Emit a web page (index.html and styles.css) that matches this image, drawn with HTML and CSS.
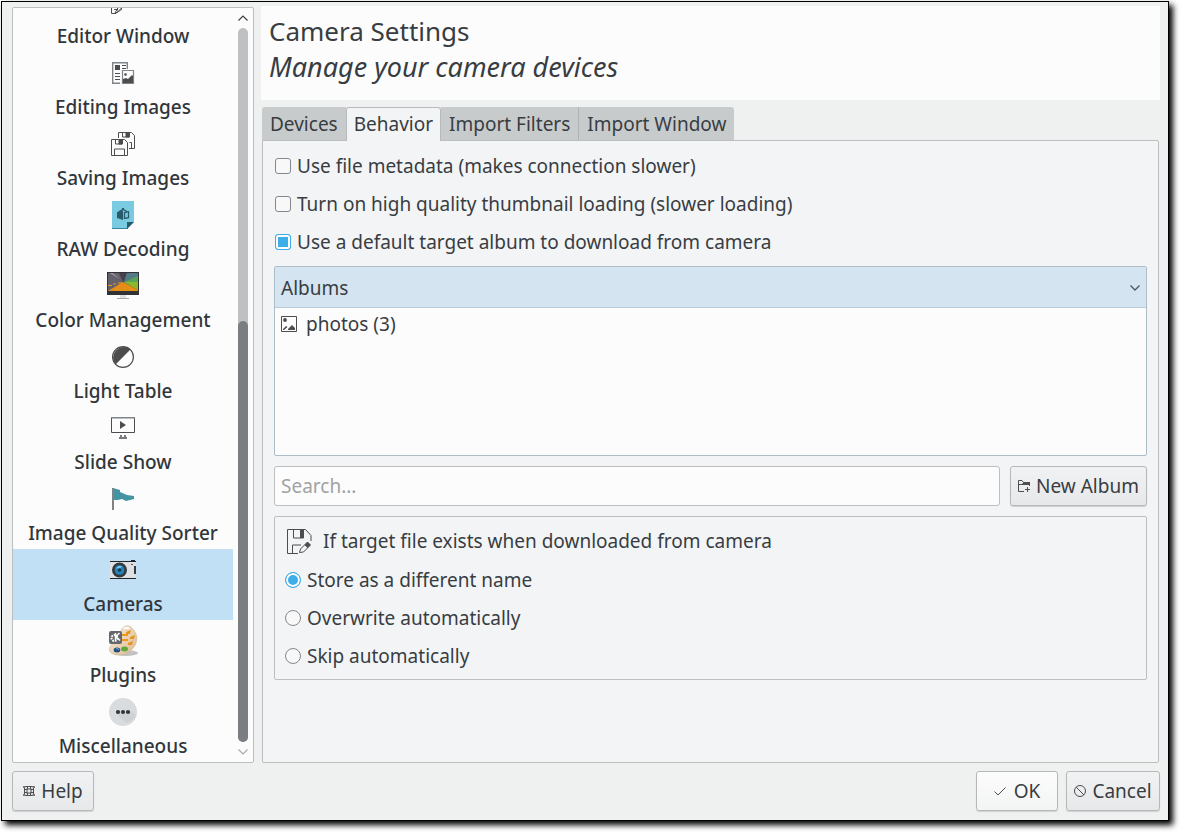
FILE: index.html
```html
<!DOCTYPE html>
<html lang="en">
<head>
<meta charset="utf-8">
<title>Camera Settings</title>
<link rel="stylesheet" href="styles.css">
</head>
<body>
<div class="window">
  <div class="content">
    <nav class="sidebar" aria-label="Settings pages">
      <div class="pages">
        <a class="page" href="#editor"><svg class="page-icon" viewBox="0 0 32 32"><path d="M4.500 18V27.500H9L15.500 21M7 23.500h3.500M10.500 18v6.500" fill="none" stroke="#4d4d4d"/><path d="M12 20l3 3-4 3-3 1z" fill="none" stroke="#4d4d4d"/></svg>Editor Window</a>
        <a class="page" href="#editing"><svg class="page-icon" viewBox="0 0 32 32"><path d="M13 26.300H5.700V5.700h14.600V12" fill="none" stroke="#7f8488" stroke-width="1.400"/><path d="M8 8h5v5H8zM15 8h4v1h-4zM15 11h4v1h-4zM8 16h5v1H8zM8 19h5v1H8zM8 22h5v1H8z" fill="#4d4d4d"/><path d="M15.500 13.500h11v13h-11z" fill="#fcfcfc" stroke="#7f8488" stroke-width="1.200"/><path d="M16 26v-4l3-1 2 1 4-4 1 1v7H16z" fill="#4d4d4d"/><circle cx="18.500" cy="17.500" r="1.300" fill="#4d4d4d"/></svg>Editing Images</a>
        <a class="page" href="#saving"><svg class="page-icon" viewBox="0 0 32 32" fill="none" stroke="#4d4d4d"><path d="M11.500 10V4.500h13l3 3v13H22M15.500 5v4h7V5M24.500 20v-5.500h-2"/><path d="M19 5h3v4h-3z" fill="#4d4d4d"/><path d="M4.500 11.500h13l3 3v13h-16zM8.500 12v4h7v-4M7.500 27v-6h10v6"/><path d="M12 12h3v4h-3z" fill="#4d4d4d"/></svg>Saving Images</a>
        <a class="page" href="#raw"><svg class="page-icon" viewBox="0 0 32 32"><path d="M5 2h22v21l-7 7H5z" fill="#7acbe1"/><path d="M5 29h15l1-1v2H5z" fill="#39859d"/><path d="M20 23h7l-7 7z" fill="#285a6c"/><path d="M10 13l6-1.500V21l-6-2zM15 9h2v2h-2z" fill="#285a6c"/><path d="M12 12.500l4-2 4 2M17.500 13.500v6l4-.8v-6z" fill="none" stroke="#285a6c" stroke-width="1.300"/></svg>RAW Decoding</a>
        <a class="page" href="#color"><svg class="page-icon" viewBox="0 0 32 32"><path d="M0 2h32v23H0z" fill="#303236"/><path d="M1 3h30v18H1z" fill="#65616b"/><path d="M1 3h5l10 9L12 3h8l-3 9z" fill="#45424c"/><path d="M2 3h4l8 7zM1 8l12 4z" fill="#9c94a3"/><path d="M20 3h11v4l-14 5z" fill="#527c85"/><path d="M31 6v6H17z" fill="#58a457"/><path d="M17 12h14v8z" fill="#8db72d"/><path d="M1 21l15-9 15 8v1z" fill="#e48e16"/><path d="M1 15.500h4M6 14h3M11 13h4" stroke="#f09819"/><path d="M13 25h6v3h-6z" fill="#dce0e1"/><path d="M10 28h12v1H10z" fill="#a4a9ac"/></svg>Color Management</a>
        <a class="page" href="#light"><svg class="page-icon" viewBox="0 0 32 32"><circle cx="16" cy="16" r="10.400" fill="#fcfcfc" stroke="#4d4d4d" stroke-width="1.200"/><path d="M8.600 23.400A10.500 10.500 0 0 1 23.400 8.600z" fill="#4d4d4d"/></svg>Light Table</a>
        <a class="page" href="#slides"><svg class="page-icon" viewBox="0 0 32 32"><path d="M4.500 5.500h23v15h-23z" fill="none" stroke="#4d4d4d"/><path d="M4 5h24v1.500H4z" fill="#7f8488"/><path d="M13 9v8l6-4z" fill="#4d4d4d"/><path d="M12 26h8M14 23v3M18 23v3" stroke="#777b80" stroke-width="2"/></svg>Slide Show</a>
        <a class="page" href="#quality"><svg class="page-icon" viewBox="0 0 32 32"><path d="M6 5l7 2v2l7 3 7 1v3l-4 1-4 1-4-2-4 1H6z" fill="#4395a4"/><path d="M5 5h2v22H5z" fill="#7e8388"/></svg>Image Quality Sorter</a>
        <a class="page selected" href="#cameras" aria-current="page"><svg class="page-icon" viewBox="0 0 32 32"><path d="M3 7h26v18H3z" fill="#dfe0e3"/><path d="M3 7h21V6h4v1h1v1H3zM3 24h26v1H3z" fill="#222529"/><circle cx="12.500" cy="16" r="7.500" fill="#353a40"/><circle cx="12.500" cy="16" r="4.800" fill="#2583b5"/><path d="M9 14.500a4 4 0 0 1 6-2l-2 2z" fill="#6ec6ed"/><circle cx="12.500" cy="16" r="1.800" fill="#173a50"/><path d="M27 12h2v8h-2z" fill="#363a3e"/><path d="M24 10h2v1h-2z" fill="#555"/></svg>Cameras</a>
        <a class="page" href="#plugins"><svg class="page-icon" viewBox="0 0 32 32"><defs><linearGradient id="wood" x1="0" y1="0" x2="1" y2="1"><stop offset="0" stop-color="#f7eee1"/><stop offset="1" stop-color="#deb98a"/></linearGradient></defs><ellipse cx="19" cy="28" rx="12" ry="3" fill="#c2c2c2"/><path d="M14 6C16 1 21-1 25 3s6 9 4 15-9 12-17 12S1 26 3 22s10-9 11-16z" fill="url(#wood)" stroke="#c9b18f" stroke-width=".6"/><path d="M17 4a3 3 0 0 1 5 0" fill="none" stroke="#fff" stroke-width="2"/><path d="M19 7l5-2-1 4h-4zM23 12l5-2-1 4h-4zM21 18l5-2-1 4h-4z" fill="#e79420"/><ellipse cx="17.500" cy="24" rx="3.500" ry="2.500" fill="#62a83c"/><ellipse cx="10" cy="25" rx="3.300" ry="2.500" fill="#254e83"/><path d="M9 24a2 2 0 0 1 3 1" stroke="#7bb0dc" fill="none"/><path d="M12 10h9M12 15h9" stroke="#ef9818" stroke-width="2"/><rect x="2" y="6" width="13" height="13" rx="2" fill="#65696e"/><circle cx="7.500" cy="13" r="3" fill="none" stroke="#fff" stroke-width="2" stroke-dasharray="1.600 1"/><path d="M8.500 8v7M12.500 8L9 11.500l4 4" fill="none" stroke="#fff" stroke-width="1.500"/></svg>Plugins</a>
        <a class="page" href="#misc"><svg class="page-icon" viewBox="0 0 32 32"><circle cx="16" cy="16" r="14" fill="#d9dcde"/><path d="M9 17.500L19 27a13 13 0 0 0 10-8l-5-4z" fill="#ced2d4"/><circle cx="11" cy="16" r="2.100" fill="#31363b"/><circle cx="16" cy="16" r="2.100" fill="#31363b"/><circle cx="21" cy="16" r="2.100" fill="#31363b"/></svg>Miscellaneous</a>
      </div>
      <div class="scrollbar" aria-hidden="true">
        <svg class="arrow" viewBox="0 0 10 6"><path d="M.5 5.500L5 1l4.500 4.500" fill="none" stroke="#3c4145" stroke-width="1.200"/></svg>
        <div class="track"><div class="thumb"></div></div>
        <svg class="arrow" viewBox="0 0 10 6"><path d="M.5 .5L5 5 9.500.5" fill="none" stroke="#a6a9ab" stroke-width="1.200"/></svg>
      </div>
    </nav>
    <main class="main">
      <header class="heading">
        <h1>Camera Settings</h1>
        <p>Manage your camera devices</p>
      </header>
      <div class="tabs" role="tablist">
        <button class="tab" role="tab" type="button">Devices</button>
        <button class="tab active" role="tab" type="button" aria-selected="true">Behavior</button>
        <button class="tab" role="tab" type="button">Import Filters</button>
        <button class="tab" role="tab" type="button">Import Window</button>
      </div>
      <section class="panel" role="tabpanel">
        <label class="option"><input type="checkbox">Use file metadata (makes connection slower)</label>
        <label class="option"><input type="checkbox">Turn on high quality thumbnail loading (slower loading)</label>
        <label class="option"><input type="checkbox" checked>Use a default target album to download from camera</label>
        <div class="albums">
          <table>
            <thead><tr><th scope="col"><div class="cell">Albums<svg class="sort" viewBox="0 0 10 6"><path d="M.5 .5L5 5 9.500.5" fill="none" stroke="#4f565c" stroke-width="1.300"/></svg></div></th></tr></thead>
            <tbody><tr><td><div class="cell"><svg class="album-icon" viewBox="0 0 16 16"><path d="M.5 .5h15v15H.5z" fill="none" stroke="#4d4d4d"/><circle cx="4" cy="4" r="1.900" fill="#4d4d4d"/><path d="M2 14v-1l3-3 1.500 1L3 14zM7 14v-1l4-4 3 3v2z" fill="#4d4d4d"/></svg>photos (3)</div></td></tr></tbody>
          </table>
        </div>
        <div class="search-row">
          <input class="search" type="text" placeholder="Search..." aria-label="Search albums">
          <button class="btn new-album" type="button"><svg class="btn-icon" viewBox="0 0 12 12"><path d="M6 11.500H.5V.5H4l1.500 2h6V6" fill="none" stroke="#4d4d4d"/><path d="M1 4h3l2-2h6v3H5L4 5H1zM9 7h1v5H9zM7 9h5v1H7z" fill="#4d4d4d"/></svg>New Album</button>
        </div>
        <div class="conflict" role="radiogroup" aria-labelledby="conflict-title">
          <div class="conflict-head"><svg class="save-icon" viewBox="0 0 25 25"><path d="M11 24.500H.5V.5h18l5.500 6V12M6.500 1v8h10V1M5.500 24v-8H14" fill="none" stroke="#4d4d4d"/><path d="M13 1h4v8h-4z" fill="#4d4d4d"/><path d="M12.500 23.500l1-3.500 7-7 3 3-7 7z" fill="none" stroke="#4d4d4d"/><path d="M17.500 16l3-3 3 3-3 3z" fill="#4d4d4d"/></svg><span id="conflict-title">If target file exists when downloaded from camera</span></div>
          <label class="option"><input type="radio" name="conflict" checked>Store as a different name</label>
          <label class="option"><input type="radio" name="conflict">Overwrite automatically</label>
          <label class="option"><input type="radio" name="conflict">Skip automatically</label>
        </div>
      </section>
    </main>
  </div>
  <footer class="actions">
    <button class="btn help" type="button"><svg class="btn-icon" viewBox="0 0 12 12"><rect x="1.500" y="1.500" width="9" height="9" rx="1.500" fill="none" stroke="#4d4d4d"/><rect x="4" y="4" width="4" height="4" fill="none" stroke="#4d4d4d"/><path d="M4.500 1v3M7.500 1v3M4.500 8v3M7.500 8v3M1 4.500h3M1 7.500h3M8 4.500h3M8 7.500h3" stroke="#4d4d4d"/><path d="M0 1h2v2H0zM10 1h2v2h-2zM0 9h2v2H0zM10 9h2v2h-2z" fill="#77797b"/></svg>Help</button>
    <button class="btn ok" type="button"><svg class="btn-icon" viewBox="0 0 12 12"><path d="M.5 6.500L4 10l7.500-7.500" fill="none" stroke="#4d4d4d"/></svg>OK</button>
    <button class="btn cancel" type="button"><svg class="btn-icon" viewBox="0 0 12 12"><circle cx="6" cy="6" r="5.500" fill="none" stroke="#4d4d4d"/><path d="M2 2l8 8" stroke="#4d4d4d"/></svg>Cancel</button>
  </footer>
</div>
</body>
</html>
```
FILE: styles.css
```css
* {
  box-sizing: border-box;
}

body {
  margin: 0;
  height: 100vh;
  padding: 1px 11px 11px 1px;
  background: #fff;
  color: #383d42;
  font: 400 19px/24px "Noto Sans", sans-serif;
}

button,
input {
  margin: 0;
  font: inherit;
  color: inherit;
}

svg {
  display: block;
  flex: none;
}

.window {
  display: flex;
  flex-direction: column;
  gap: 8px;
  height: 100%;
  padding: 4px 8px 9px 10px;
  border: 1px solid #000;
  background: #eff0f0;
  box-shadow: 4px 4px 6px #000;
}

.content {
  display: flex;
  flex: 1;
  gap: 7px;
  min-height: 0;
}

.sidebar {
  display: flex;
  flex: none;
  width: 242px;
  margin-top: 1px;
  border: 1px solid #bcbebf;
  border-radius: 2px;
  background: #fcfcfc;
}

.pages {
  display: flex;
  flex: 1;
  flex-direction: column;
  justify-content: flex-end;
  min-width: 0;
  overflow: hidden;
}

.page {
  display: flex;
  flex: none;
  flex-direction: column;
  align-items: center;
  gap: 2px;
  padding-top: 5px;
  color: #31363b;
  font-weight: 500;
  line-height: 32px;
  text-decoration: none;
  white-space: nowrap;
}

.page.selected {
  background: #c2e0f5;
}

.page-icon {
  width: 32px;
  height: 32px;
}

.scrollbar {
  display: flex;
  flex: none;
  flex-direction: column;
  align-items: center;
  gap: 7px;
  width: 20px;
  padding: 7px 0;
}

.arrow {
  width: 10px;
  height: 6px;
}

.track {
  display: flex;
  flex: 1;
  flex-direction: column;
  justify-content: flex-end;
  width: 10px;
  border-radius: 5px;
  background: #bfc0c1;
}

.thumb {
  height: 59%;
  border-radius: 5px;
  background: #7a7e82;
}

.main {
  display: flex;
  flex: 1;
  flex-direction: column;
  min-width: 0;
}

.heading {
  padding: 7px 8px 15px;
  background: #fcfcfc;
}

.heading h1,
.heading p {
  margin: 0;
  font-size: 26px;
  font-weight: inherit;
  line-height: 36px;
}

.heading p {
  font-size: 27px;
  font-style: italic;
}

.tabs {
  display: flex;
  margin: 7px 1px 0;
}

.tab {
  height: 33px;
  padding: 0 8px;
  border: 0;
  border-right: 1px solid #b0b3b5;
  background: #c8cbcc;
}

.tab:first-child {
  border-right: 0;
  border-radius: 3px 0 0;
}

.tab:last-child {
  border-right: 0;
  border-radius: 0 3px 0 0;
}

.tab.active {
  height: 34px;
  margin-bottom: -1px;
  padding: 0 7px 2px;
  border: 1px solid #b7babb;
  border-bottom: 0;
  border-radius: 3px 3px 0 0;
  background: #f3f4f6;
  z-index: 1;
}

.panel {
  flex: 1;
  margin: 0 1px;
  padding: 6px 11px;
  border: 1px solid #bcbebf;
  border-radius: 0 2px 2px;
  background: #f3f4f6;
}

.option {
  display: flex;
  align-items: center;
  gap: 6px;
  height: 38px;
  padding-left: 1px;
}

.option input {
  flex: none;
  width: 16px;
  height: 16px;
  appearance: none;
  border: 1px solid #85888b;
  border-radius: 3px;
  background: #f8f8f9;
}

.option input:checked {
  border-color: #3daee9;
  background: #3daee9;
  box-shadow: inset 0 0 0 2px #fff;
}

.option input[type="radio"] {
  border-radius: 50%;
}

.albums {
  min-height: 190px;
  margin-top: 5px;
  border: 1px solid #adbdc8;
  border-radius: 2px;
  background: #fcfcfc;
}

table {
  width: 100%;
  border-collapse: collapse;
}

th,
td {
  padding: 0;
  font-weight: inherit;
  text-align: left;
}

.cell {
  display: flex;
  align-items: center;
  gap: 9px;
  height: 32px;
  padding: 0 6px;
}

th .cell {
  justify-content: space-between;
  height: 41px;
  padding-top: 2px;
  border-bottom: 1px solid #b9cbd8;
  background: #d4e4f1;
}

.sort {
  width: 10px;
  height: 6px;
}

.album-icon {
  width: 16px;
  height: 16px;
}

.search-row {
  display: flex;
  gap: 10px;
  margin: 10px 0;
}

.search {
  flex: 1;
  min-width: 0;
  height: 40px;
  padding: 0 6px;
  border: 1px solid #bcbebf;
  border-radius: 3px;
  background: #fcfcfc;
}

.search::placeholder {
  color: #a0a2a4;
  opacity: 1;
}

.btn {
  display: flex;
  align-items: center;
  justify-content: center;
  gap: 6px;
  height: 40px;
  padding: 0;
  border: 1px solid #b5b7b9;
  border-radius: 3px;
  background: linear-gradient(#f1f2f3, #e7e8e9);
  box-shadow: 0 1px 1px #cfd0d1;
  white-space: nowrap;
}

.btn-icon {
  width: 12px;
  height: 12px;
}

.new-album {
  width: 137px;
}

.conflict {
  padding: 5px 9px 4px;
  border: 1px solid #bcbebf;
  border-radius: 2px;
}

.conflict-head {
  display: flex;
  align-items: center;
  gap: 11px;
  height: 39px;
  padding: 0 0 1px 3px;
}

.save-icon {
  width: 25px;
  height: 25px;
}

.actions {
  display: flex;
  gap: 8px;
}

.help {
  width: 82px;
  margin-right: auto;
}

.ok {
  width: 82px;
  gap: 8px;
  background: linear-gradient(#fcfcfc, #f3f4f4);
}

.cancel {
  width: 94px;
}
```
